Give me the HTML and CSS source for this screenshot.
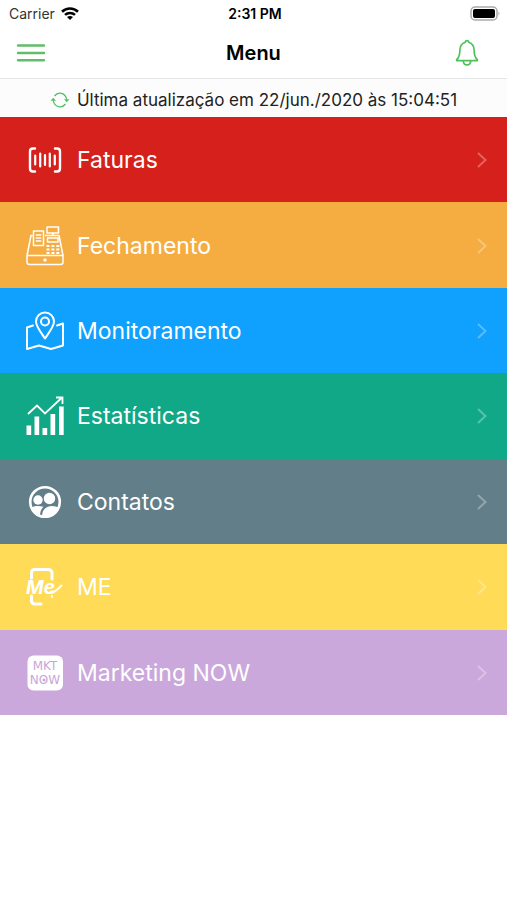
FILE: index.html
```html
<!DOCTYPE html>
<html lang="pt-BR">
<head>
    <meta charset="UTF-8">
    <meta name="viewport" content="width=device-width, initial-scale=1.0">
    <title>Menu</title>
    <link rel="stylesheet" href="styles.css">
</head>
<body>

    <div class="status-bar">
        <div class="carrier">
            <span>Carrier</span>
            <svg width="18" height="14" viewBox="0 0 18 14" fill="none" stroke="#000" stroke-width="2.6">
                <path d="M1 4.700C5.500 .4 12.500 .4 17 4.700"/>
                <path d="M4 7.900C6.800 5.300 11.200 5.300 14 7.900"/>
                <path d="M9 13L6 10.100C7.700 8.600 10.300 8.600 12 10.100Z" fill="#000" stroke="none"/>
            </svg>
        </div>
        <time class="clock">2:31 PM</time>
        <svg class="battery" width="31" height="15" viewBox="0 0 31 15">
            <rect x="1" y="1" width="26" height="13" rx="4" fill="#fff" stroke="#aaa" stroke-width="1.500"/>
            <rect x="3" y="3" width="22" height="9" rx="2" fill="#000"/>
            <path d="M28.500 5.500q2 2 0 4z" fill="#aaa"/>
        </svg>
    </div>

    <header class="nav-bar">
        <button class="icon-button" type="button" aria-label="Abrir menu">
            <svg width="30" height="20" viewBox="0 0 30 20" fill="none" stroke="#62bd69" stroke-width="2.400" stroke-linecap="round">
                <path d="M2 2.500h26M2 10h26M2 17.200h26"/>
            </svg>
        </button>
        <h1>Menu</h1>
        <button class="icon-button bell" type="button" aria-label="Notificações">
            <svg width="24" height="28" viewBox="0 0 24 28" fill="none" stroke="#4fc05a" stroke-width="1.700" stroke-linejoin="round">
                <path d="M10.300 3.300C10.300 1 13.700 1 13.700 3.300C18 4.500 19.200 8 19.200 12C19.200 17 20 18.500 22.300 20.700C22.600 21.300 22.300 21.700 21.700 21.700H2.300C1.700 21.700 1.400 21.300 1.700 20.700C4 18.500 4.800 17 4.800 12C4.800 8 6 4.500 10.300 3.300Z"/>
                <path d="M8.300 22C8.500 27.200 15.500 27.200 15.700 22"/>
            </svg>
        </button>
    </header>

    <div class="update-bar">
        <svg width="20" height="18" viewBox="0 0 20 18" fill="none" stroke="#4fc065" stroke-width="1.300">
            <path d="M4.500 5C8 .3 15.500 1.500 16.700 8.500"/>
            <path d="M15.500 13C12 17.700 4.500 16.500 3.300 9.500"/>
            <path d="M14 8.200h5.400l-2.700 3z" fill="#4fc065" stroke="none"/>
            <path d="M.6 9.800H6l-2.700-3z" fill="#4fc065" stroke="none"/>
        </svg>
        <span>Última atualização em 22/jun./2020 às 15:04:51</span>
    </div>

    <nav class="menu">
        <a class="item faturas" href="#faturas">
            <svg class="icon" viewBox="0 0 40 40" fill="none" stroke="#fff" stroke-linecap="round">
                <path d="M10 8.500H8Q5 8.500 5 11.500V28.500Q5 31.500 8 31.500H10M30 8.500H32Q35 8.500 35 11.500V28.500Q35 31.500 32 31.500H30" stroke-width="2.400"/>
                <path d="M10.200 15.500v9M15.200 13.500v13M20 15v10M24.800 13.500v13M29.800 15.500v9" stroke-width="2.200"/>
            </svg>
            <span>Faturas</span>
            <svg class="chevron" viewBox="0 0 10 18"><path d="M1 2l7.500 7L1 16"/></svg>
        </a>
        <a class="item fechamento" href="#fechamento">
            <svg class="icon" viewBox="0 0 40 40" fill="none" stroke="#fff" stroke-width="1.500" stroke-linejoin="round">
                <path d="M8 9.500H6L2 29.500V36Q2 38.500 4.500 38.500H35.500Q38 38.500 38 36V29.500L34 9.500H20M2 29.500H38"/>
                <path d="M8.500 5H18.500V19.500H8.500Z"/>
                <path d="M10.800 9h5.500M10.800 12h5.500M10.800 15h5.500" stroke-width="1.300"/>
                <path d="M22 1H33.500V7H22ZM27.800 7V9.500M22.500 12H33V16H22.500Z"/>
                <path d="M21.500 20h3M26.400 20h3M31.300 20h3M21.500 23.500h3M26.400 23.500h3M31.300 23.500h3M21.500 27h3M26.400 27h3M31.300 27h3" stroke-width="2.200"/>
                <circle cx="20" cy="34" r="1" fill="#fff"/>
            </svg>
            <span>Fechamento</span>
            <svg class="chevron" viewBox="0 0 10 18"><path d="M1 2l7.500 7L1 16"/></svg>
        </a>
        <a class="item monitoramento" href="#monitoramento">
            <svg class="icon" viewBox="0 0 40 40" fill="none" stroke="#fff" stroke-width="2" stroke-linecap="round" stroke-linejoin="round">
                <path d="M20 27.500C16 21.500 11 15.500 11 10.500A9 9 0 0 1 29 10.500C29 15.500 24 21.500 20 27.500Z"/>
                <circle cx="20" cy="10.500" r="4"/>
                <path d="M8 14.500L2 16.500V38L14 34.500L26 38L38 34.500V12.500L32 14.500"/>
            </svg>
            <span>Monitoramento</span>
            <svg class="chevron" viewBox="0 0 10 18"><path d="M1 2l7.500 7L1 16"/></svg>
        </a>
        <a class="item estatisticas" href="#estatisticas">
            <svg class="icon" viewBox="0 0 40 40" fill="#fff">
                <path d="M1.500 29.500h4.700V39H1.500zM9.500 20.500h4.700V39H9.500zM17.500 32h4.700v7h-4.700zM25.500 18h4.700v21h-4.700zM34 10.500h4.700V39H34z"/>
                <path d="M3 18L12 9.500L20 17.500L36.500 2M31 1.500H37.500V8" fill="none" stroke="#fff" stroke-width="1.800"/>
            </svg>
            <span>Estatísticas</span>
            <svg class="chevron" viewBox="0 0 10 18"><path d="M1 2l7.500 7L1 16"/></svg>
        </a>
        <a class="item contatos" href="#contatos">
            <svg class="icon" viewBox="0 0 40 40" fill="#fff">
                <circle cx="20" cy="20" r="14.800" fill="none" stroke="#fff" stroke-width="2.600"/>
                <circle cx="13" cy="18" r="4.700"/>
                <circle cx="24.500" cy="16.500" r="5.700"/>
                <path d="M6.500 25.500C9 23.500 14 23.500 18.500 24.700C16.500 26.500 15.300 29 15 33.500C11 32.500 8 29.500 6.500 25.500Z"/>
                <path d="M17 34.500C17 22.500 29 22.500 34 26C31.500 32 25 35.500 17 34.500Z"/>
            </svg>
            <span>Contatos</span>
            <svg class="chevron" viewBox="0 0 10 18"><path d="M1 2l7.500 7L1 16"/></svg>
        </a>
        <a class="item me" href="#me">
            <svg class="icon" viewBox="0 0 40 40" fill="none" stroke="#fff" stroke-linecap="round" stroke-linejoin="round">
                <path d="M6.500 11V6Q6.500 2.500 10 2.500H23Q27 2.500 27 6.500V12M6.500 29V33.500Q6.500 37 10 37H16" stroke-width="3"/>
                <text class="me-logo" x="1" y="27">Me</text>
                <path d="M25 26C30 26 33 22 36.500 18.500M27 29v1" stroke-width="2"/>
            </svg>
            <span>ME</span>
            <svg class="chevron" viewBox="0 0 10 18"><path d="M1 2l7.500 7L1 16"/></svg>
        </a>
        <a class="item marketing" href="#marketing">
            <svg class="icon" viewBox="0 0 40 40">
                <rect x="2.500" y="2.500" width="35.500" height="35" rx="6" fill="#fff"/>
                <text class="mkt-logo" x="20" y="17">MKT</text>
                <text class="mkt-logo" x="20" y="31">NOW</text>
                <circle cx="19" cy="27" r="1.500" fill="#c9a6da"/>
            </svg>
            <span>Marketing NOW</span>
            <svg class="chevron" viewBox="0 0 10 18"><path d="M1 2l7.500 7L1 16"/></svg>
        </a>
    </nav>

</body>
</html>
```
FILE: styles.css
```css
body {
    margin: 0;
    background-color: #fff;
    color: #000;
    font-family: Inter, "Liberation Sans", sans-serif;
}

.status-bar {
    display: grid;
    grid-template-columns: 1fr auto 1fr;
    align-items: center;
    height: 27px;
    padding: 0 6px 0 9px;
    font-size: 14px;
}

.carrier {
    display: flex;
    align-items: center;
    gap: 6px;
    color: #333;
}

.clock {
    font-weight: 600;
}

.battery {
    justify-self: end;
}

.nav-bar {
    display: grid;
    grid-template-columns: 1fr auto 1fr;
    align-items: center;
    height: 51px;
    padding: 0 28px 0 16px;
    border-bottom: 1px solid #e6e6e6;
}

.nav-bar h1 {
    margin: 0;
    padding-left: 12px;
    font-size: 20px;
    font-weight: 600;
}

.icon-button {
    display: flex;
    justify-self: start;
    padding: 0;
    border: none;
    background: none;
}

.bell {
    justify-self: end;
}

.update-bar {
    display: flex;
    align-items: center;
    justify-content: center;
    gap: 7px;
    height: 35px;
    padding-top: 3px;
    background-color: #fcfcfc;
    color: #222;
    font-size: 17px;
}

.menu {
    display: grid;
    grid-auto-rows: 1fr;
    min-height: 598px;
}

.item {
    display: flex;
    align-items: center;
    gap: 12px;
    padding: 1px 20px 0 25px;
    color: #fff;
    font-size: 23px;
    text-decoration: none;
}

.icon {
    width: 40px;
    height: 40px;
}

.chevron {
    width: 10px;
    height: 18px;
    margin-left: auto;
    fill: none;
    stroke: rgba(255, 255, 255, 0.3);
    stroke-width: 2;
}

.me-logo {
    fill: #fff;
    stroke: none;
    font-size: 19px;
    font-style: italic;
    font-weight: 700;
}

.mkt-logo {
    fill: #c9a6da;
    font-family: "DejaVu Sans", sans-serif;
    font-size: 12px;
    text-anchor: middle;
}

.faturas { background-color: #d6201b; }
.fechamento { background-color: #f5ad42; }
.monitoramento { background-color: #10a0fd; }
.estatisticas { background-color: #10a886; }
.contatos { background-color: #627e88; }
.me { background-color: #ffdb58; }
.marketing { background-color: #cba8dc; }
```
